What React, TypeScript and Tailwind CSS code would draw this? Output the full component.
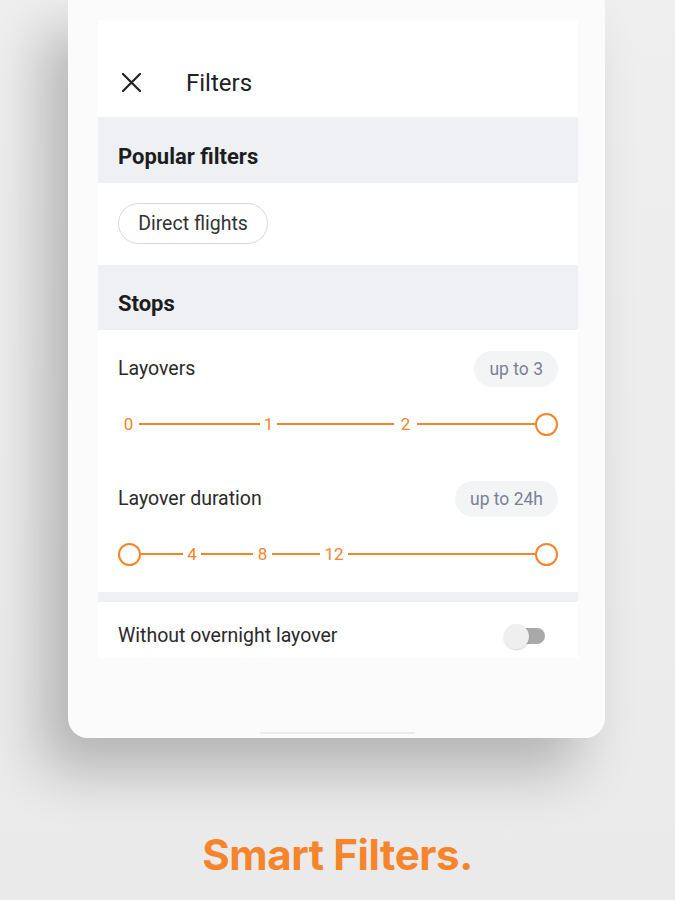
import type { ReactNode } from 'react';

const ORANGE = '#f5842b';

const Line = ({ className = 'flex-1' }: { className?: string }) => (
  <div className={`h-[2.5px] bg-[#f5842b] ${className}`} />
);

const Knob = () => (
  <div className="h-[23px] w-[23px] shrink-0 rounded-full border-[2.5px] border-[#f5842b] bg-white" />
);

// tick label sits in a fixed box so the segments line up with the reference
const Tick = ({ children, className }: { children: ReactNode; className: string }) => (
  <span className={`shrink-0 text-center text-[17px] leading-none text-[#f5842b] ${className}`}>
    {children}
  </span>
);

const Badge = ({ children }: { children: ReactNode }) => (
  <span className="flex h-[36px] items-center rounded-full bg-[#f2f4f6] px-[15px] text-[17.5px] text-[#7b8194]">
    {children}
  </span>
);

const SectionTitle = ({ title, height }: { title: string; height: string }) => (
  <div className={`flex items-end bg-[#eef0f3] px-5 pb-[13px] ${height}`}>
    <h2 className="text-[22px] font-bold leading-[26px] text-[#1d1d1f]">{title}</h2>
  </div>
);

export default function App() {
  return (
    <div
      className="relative h-[900px] w-[675px] overflow-hidden bg-gradient-to-b from-[#efefef] to-[#eaeaea]"
      style={{ fontFamily: 'Roboto, "Noto Sans", sans-serif' }}
    >
      {/* phone */}
      <div className="relative ml-[68px] h-[738px] w-[537px] rounded-b-[20px] bg-[#fbfbfb] shadow-[-26px_32px_56px_rgba(0,0,0,0.24)]">
        <div className="ml-[30px] w-[480px] pt-[20px]">
          {/* header */}
          <div className="flex h-[97px] items-end bg-white pb-[20px]">
            <svg width="19" height="19" viewBox="0 0 19 19" className="mb-[5px] ml-[24px]">
              <path d="M1 1L18 18M18 1L1 18" stroke="#222" strokeWidth="2.2" strokeLinecap="round" />
            </svg>
            <span className="ml-[45px] text-[24px] leading-7 text-[#202124]">Filters</span>
          </div>

          <SectionTitle title="Popular filters" height="h-[66px]" />

          <div className="h-[82px] bg-white px-5 pt-[20px]">
            <span className="inline-flex h-[41px] w-[150px] items-center justify-center rounded-full border border-[#d9d9d9] text-[19.5px] text-[#333]">
              Direct flights
            </span>
          </div>

          <SectionTitle title="Stops" height="h-[65px]" />

          <div className="bg-white px-5 pb-[26px] pt-[21px]">
            <div className="flex h-[36px] items-center justify-between">
              <span className="text-[19.5px] text-[#2a2a2a]">Layovers</span>
              <Badge>up to 3</Badge>
            </div>
            <div className="mt-[25px] flex h-[24px] items-center">
              <Tick className="w-[21px]">0</Tick>
              <Line className="w-[121px]" />
              <Tick className="w-[17px]">1</Tick>
              <Line className="w-[117px]" />
              <Tick className="w-[23px]">2</Tick>
              <Line />
              <Knob />
            </div>

            <div className="mt-[45px] flex h-[36px] items-center justify-between">
              <span className="text-[19.5px] text-[#2a2a2a]">Layover duration</span>
              <Badge>up to 24h</Badge>
            </div>
            <div className="mt-[25px] flex h-[24px] items-center">
              <Knob />
              <Line className="w-[42px]" />
              <Tick className="w-[18px]">4</Tick>
              <Line className="w-[52px]" />
              <Tick className="w-[19px]">8</Tick>
              <Line className="w-[48px]" />
              <Tick className="w-[28px]">12</Tick>
              <Line />
              <Knob />
            </div>
          </div>

          <div className="h-[10px] bg-[#eef0f3]" />

          <div className="flex h-[56px] items-start justify-between bg-white px-5 pt-[22px]">
            <span className="text-[19.5px] leading-6 text-[#2a2a2a]">Without overnight layover</span>
            <div className="relative mr-[13px] mt-[4px] h-[16px] w-[36px] rounded-full bg-[#a9a9a9]">
              <div className="absolute -left-[5px] -top-[4.5px] h-[25px] w-[25px] rounded-full bg-[#efefef] shadow-[0_1px_2px_rgba(0,0,0,0.18)]" />
            </div>
          </div>
        </div>

        {/* home indicator */}
        <div className="absolute bottom-[4px] left-[192px] h-[2px] w-[155px] rounded-full bg-[#ececec]" />
      </div>

      <h1
        className="mt-[96px] text-center text-[42px] font-bold leading-none tracking-[-0.4px]"
        style={{ color: ORANGE, fontFamily: 'Inter, "Noto Sans", sans-serif' }}
      >
        Smart Filters.
      </h1>
    </div>
  );
}
